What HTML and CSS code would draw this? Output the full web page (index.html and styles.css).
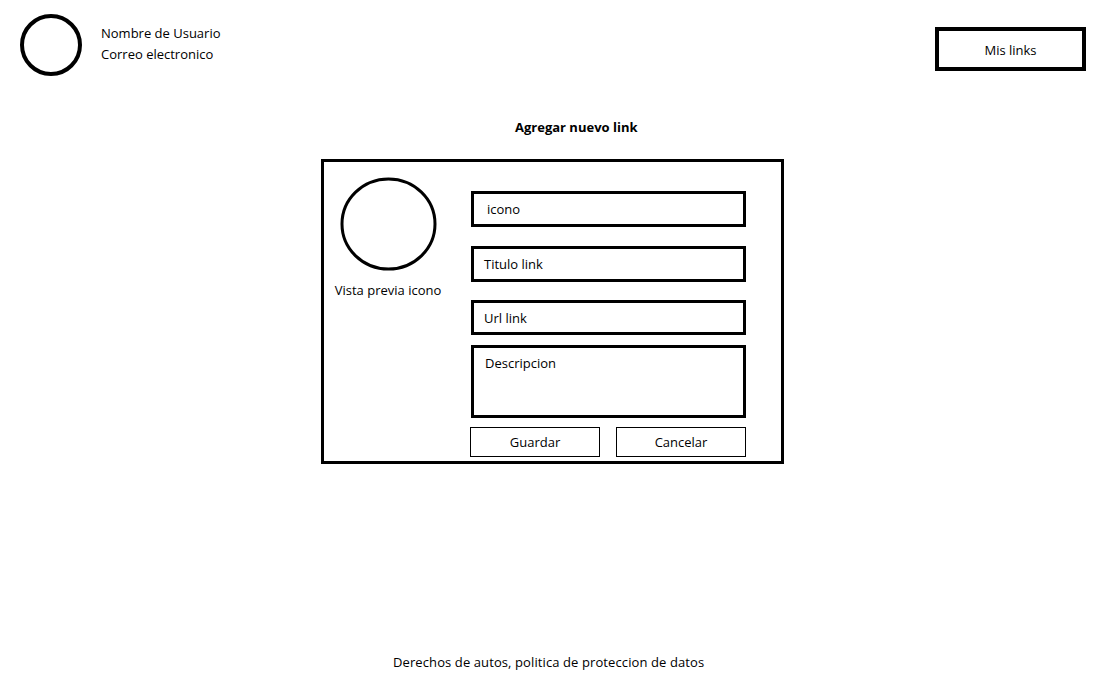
FILE: index.html
```html
<!DOCTYPE html>
<html lang="es">
<head>
<meta charset="utf-8">
<title>Agregar nuevo link</title>
<link rel="stylesheet" href="styles.css">
</head>
<body>
<div class="page">
  <header class="header">
    <div class="user">
      <div class="avatar"></div>
      <div class="user-info">
        <div class="user-line">Nombre de Usuario</div>
        <div class="user-line">Correo electronico</div>
      </div>
    </div>
    <div class="mis-links">Mis links</div>
  </header>

  <main class="main">
    <h1 class="title">Agregar nuevo link</h1>
    <form class="card">
      <div class="preview">
        <svg class="preview-circle" width="97" height="94" viewBox="0 0 97 94">
          <ellipse cx="48.5" cy="47" rx="46.5" ry="45" fill="none" stroke="#000" stroke-width="3"/>
        </svg>
        <div class="preview-label">Vista previa icono</div>
      </div>
      <div class="fields">
        <div class="field field-icono">icono</div>
        <div class="field field-titulo">Titulo link</div>
        <div class="field field-url">Url link</div>
        <div class="field field-desc">Descripcion</div>
        <div class="buttons">
          <div class="btn">Guardar</div>
          <div class="btn">Cancelar</div>
        </div>
      </div>
    </form>
  </main>

  <footer class="footer">Derechos de autos, politica de proteccion de datos</footer>
</div>
</body>
</html>
```

FILE: styles.css
```css
html, body {
  margin: 0;
  padding: 0;
  background: #fff;
}

.page {
  height: 684px;
  display: flex;
  flex-direction: column;
  font-family: "Open Sans", "Liberation Sans", sans-serif;
  font-size: 13px;
  color: #000;
}

.header {
  display: flex;
  justify-content: space-between;
  align-items: flex-start;
  padding: 14px 27px 0 20px;
}

.user {
  display: flex;
  align-items: flex-start;
}

.avatar {
  width: 54px;
  height: 54px;
  border: 4px solid #000;
  border-radius: 50%;
}

.user-info {
  margin-left: 19px;
  padding-top: 9px;
}

.user-line {
  line-height: 21px;
  height: 21px;
}

.mis-links {
  margin-top: 13px;
  width: 143px;
  height: 35px;
  border: 4px solid #000;
  display: flex;
  align-items: center;
  justify-content: center;
  padding-top: 1px;
  box-sizing: content-box;
}

.main {
  display: flex;
  flex-direction: column;
}

.title {
  margin: 42px 0 0 515px;
  font-size: 13px;
  font-weight: bold;
  line-height: 18px;
}

.card {
  margin: 23px 0 0 321px;
  width: 457px;
  height: 299px;
  border: 3px solid #000;
  display: flex;
  align-items: flex-start;
}

.preview {
  width: 112px;
  margin: 15px 0 0 8px;
  display: flex;
  flex-direction: column;
  align-items: center;
}

.preview-circle {
  display: block;
}

.preview-label {
  margin-top: 10px;
  white-space: nowrap;
  line-height: 18px;
}

.fields {
  margin: 29px 0 0 27px;
  width: 275px;
  display: flex;
  flex-direction: column;
}

.field {
  box-sizing: border-box;
  border: 3px solid #000;
  padding-left: 10px;
  display: flex;
  align-items: center;
}

.field-icono {
  height: 36px;
  padding-left: 13px;
}

.field-titulo {
  height: 36px;
  margin-top: 19px;
}

.field-url {
  height: 35px;
  margin-top: 18px;
}

.field-desc {
  height: 73px;
  margin-top: 10px;
  align-items: flex-start;
  padding-top: 6px;
  padding-left: 11px;
}

.buttons {
  margin: 9px 0 0 -1px;
  display: flex;
  gap: 16px;
}

.btn {
  box-sizing: border-box;
  width: 130px;
  height: 30px;
  border: 1px solid #000;
  display: flex;
  align-items: center;
  justify-content: center;
}

.footer {
  margin-top: auto;
  margin-left: 393px;
  padding-bottom: 13px;
  line-height: 18px;
  letter-spacing: 0.1px;
}
```
